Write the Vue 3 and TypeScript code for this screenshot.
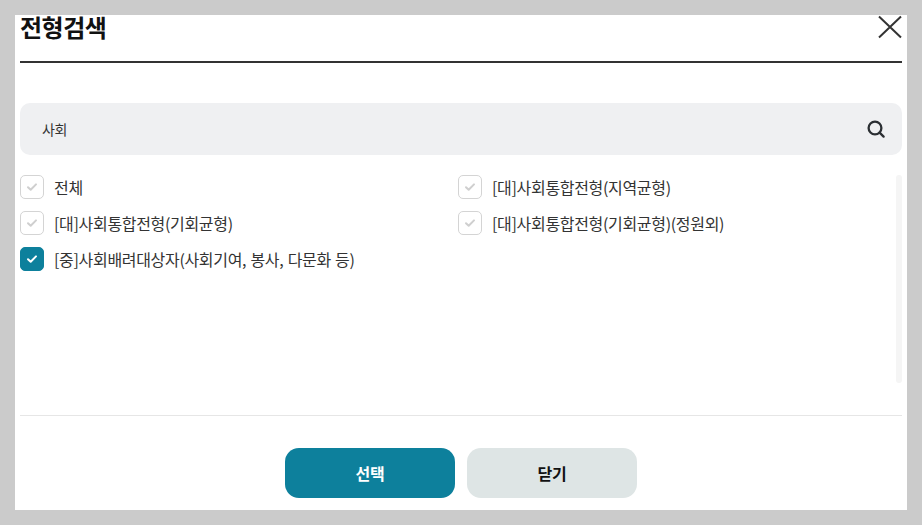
<script setup lang="ts">
interface Option { label: string; checked: boolean }
const options: Option[] = [
  { label: '전체', checked: false },
  { label: '[대]사회통합전형(지역균형)', checked: false },
  { label: '[대]사회통합전형(기회균형)', checked: false },
  { label: '[대]사회통합전형(기회균형)(정원외)', checked: false },
  { label: '[중]사회배려대상자(사회기여, 봉사, 다문화 등)', checked: true },
]
</script>

<template>
  <div class="backdrop">
    <section class="modal">
      <header class="head">
        <h2 class="title">전형검색</h2>
        <button class="close" type="button" aria-label="닫기">
          <svg width="24" height="24" viewBox="0 0 24 24" fill="none" stroke="#333" stroke-width="2">
            <path d="M1 1.5 23 22.5M23 1.5 1 22.5" />
          </svg>
        </button>
      </header>
      <div class="search">
        <span class="query">사회</span>
        <svg class="glass" width="18" height="18" viewBox="0 0 18 18" fill="none" stroke="#2b2f33" stroke-width="2.3">
          <circle cx="8" cy="8" r="6.4" />
          <path d="M12.6 12.6 16.6 16.6" stroke-linecap="round" />
        </svg>
      </div>
      <div class="list-wrap">
        <ul class="list">
          <li v-for="o in options" :key="o.label" class="item">
            <span class="box" :class="{ on: o.checked }">
              <svg width="12" height="10" viewBox="0 0 12 10" fill="none" stroke="currentColor" stroke-width="2">
                <path d="M2 5.2 4.7 7.8 10 2.4" stroke-linecap="round" stroke-linejoin="round" />
              </svg>
            </span>
            <span class="label">{{ o.label }}</span>
          </li>
        </ul>
        <div class="track"></div>
      </div>
      <footer class="foot">
        <button class="btn primary" type="button">선택</button>
        <button class="btn ghost" type="button">닫기</button>
      </footer>
    </section>
  </div>
</template>

<style>
html, body { margin: 0; background: #cbcbcb; }
</style>

<style scoped>
.backdrop {
  width: 922px;
  height: 525px;
  box-sizing: border-box;
  padding: 15px;
  background: #cbcbcb;
  font-family: "Noto Sans CJK KR", "Noto Sans", sans-serif;
  color: #222;
  overflow: hidden;
}
.modal {
  width: 892px;
  height: 495px;
  box-sizing: border-box;
  padding: 0 5px;
  background: #fff;
  display: flex;
  flex-direction: column;
}
.head {
  height: 48px;
  box-sizing: border-box;
  border-bottom: 2px solid #333;
  display: flex;
  justify-content: space-between;
  align-items: flex-start;
}
.title {
  margin: -1px 0 0;
  font-size: 24px;
  font-weight: 700;
  line-height: 26px;
  letter-spacing: -0.02em;
  color: #111;
}
.close {
  border: 0;
  padding: 0;
  background: none;
  width: 24px;
  height: 24px;
  display: block;
  margin-right: 0;
}
.search {
  margin-top: 40px;
  height: 52px;
  border-radius: 10px;
  background: #eff0f2;
  display: flex;
  align-items: center;
  justify-content: space-between;
  padding: 0 17px 0 22px;
}
.query {
  font-size: 14px;
  letter-spacing: -0.02em;
  color: #333;
}
.glass { display: block; }
.list-wrap {
  margin-top: 20px;
  height: 240px;
  border-bottom: 1px solid #e6e6e6;
  position: relative;
}
.list {
  list-style: none;
  margin: 0;
  padding: 0;
  display: grid;
  grid-template-columns: 438px 1fr;
  grid-auto-rows: 36px;
}
.item {
  display: flex;
  align-items: flex-start;
  gap: 10px;
}
.box {
  width: 24px;
  height: 24px;
  box-sizing: border-box;
  border: 1px solid #d4d4d4;
  border-radius: 5px;
  background: #fff;
  color: #cfcfcf;
  display: flex;
  align-items: center;
  justify-content: center;
}
.box.on {
  border-color: #0d809c;
  background: #0d809c;
  color: #fff;
}
.label {
  font-size: 16px;
  line-height: 24px;
  letter-spacing: -0.02em;
  word-spacing: 1px;
  color: #333;
}
.track {
  position: absolute;
  right: 0;
  top: 0;
  width: 6px;
  height: 208px;
  border-radius: 3px;
  background: #f5f5f5;
}
.foot {
  margin-top: 32px;
  display: flex;
  justify-content: center;
  gap: 12px;
}
.btn {
  width: 170px;
  height: 50px;
  border: 0;
  border-radius: 14px;
  font-family: inherit;
  font-size: 16px;
  font-weight: 700;
  letter-spacing: -0.02em;
}
.primary { background: #0d809c; color: #fff; }
.ghost { background: #dee5e5; color: #111; }
</style>
